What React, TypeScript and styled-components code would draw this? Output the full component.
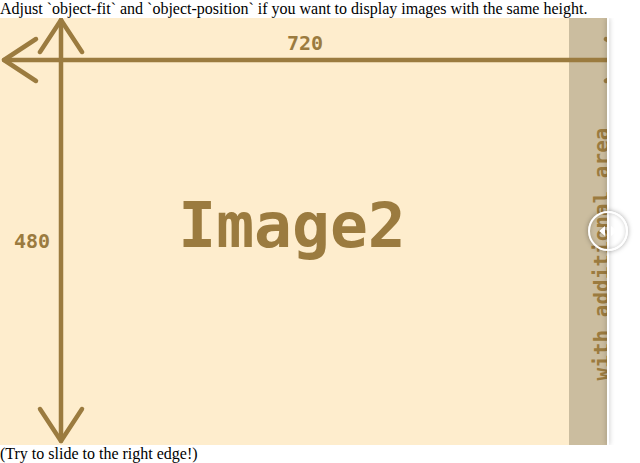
import React from "react";
import styled, { createGlobalStyle } from "styled-components";

const Global = createGlobalStyle`
  html, body { margin: 0; padding: 0; background: #ffffff; }
  body { font-family: "Liberation Serif", "Times New Roman", serif; font-size: 16px; color: #000; }
`;

const Page = styled.div`
  display: flex;
  flex-direction: column;
  width: 640px;
`;

const Note = styled.div`
  line-height: 18px;
  height: 18px;
  white-space: nowrap;
`;

const Slider = styled.div`
  position: relative;
  width: 640px;
  height: 427px;
  overflow: hidden;
  background: #ffffff;
`;

const Clip = styled.div<{ $pos: number }>`
  position: absolute;
  inset: 0;
  overflow: hidden;
  width: ${(p) => p.$pos}px;
`;

const Divider = styled.div<{ $pos: number }>`
  position: absolute;
  top: 0;
  bottom: 0;
  left: ${(p) => p.$pos}px;
  width: 2px;
  background: #ffffff;
  box-shadow: 0 0 5px rgba(0, 0, 0, 0.35);
`;

const Handle = styled.div<{ $pos: number }>`
  position: absolute;
  left: ${(p) => p.$pos - 20}px;
  top: 193px;
  width: 40px;
  height: 40px;
  border: 2px solid #ffffff;
  border-radius: 50%;
  box-shadow: 0 0 5px rgba(0, 0, 0, 0.35), inset 0 0 4px rgba(0, 0, 0, 0.2);
  display: flex;
  align-items: center;
  justify-content: space-between;
  padding: 0 9px;
  box-sizing: border-box;
`;

const ArrowLeft = styled.span`
  width: 0;
  height: 0;
  border-top: 5px solid transparent;
  border-bottom: 5px solid transparent;
  border-right: 6px solid #ffffff;
  filter: drop-shadow(0 0 1px rgba(0, 0, 0, 0.3));
`;

const ArrowRight = styled.span`
  width: 0;
  height: 0;
  border-top: 5px solid transparent;
  border-bottom: 5px solid transparent;
  border-left: 6px solid #ffffff;
`;

const Art = styled.svg`
  display: block;
  width: 640px;
  height: 427px;
`;

const BROWN = "#9b7b3f";
const MONO = '"DejaVu Sans Mono", "Liberation Mono", monospace';

function Image2() {
  return (
    <Art viewBox="0 0 640 427">
      <rect x="0" y="0" width="640" height="427" fill="#feedcd" />
      <rect x="569" y="0" width="71" height="427" fill="#cbbd9f" />
      <g stroke={BROWN} strokeWidth="4.5" strokeLinecap="round" strokeLinejoin="round" fill="none">
        <line x1="4" y1="42" x2="638" y2="42" />
        <polyline points="36,21 4,42 36,63" />
        <polyline points="606,21 638,42 606,63" />
        <line x1="61" y1="2" x2="61" y2="423" />
        <polyline points="40,34 61,2 82,34" />
        <polyline points="40,391 61,423 82,391" />
      </g>
      <g fill={BROWN} fontFamily={MONO} fontWeight="bold" textAnchor="middle">
        <text x="305" y="32" fontSize="20">720</text>
        <text x="32" y="230" fontSize="20">480</text>
        <text x="292" y="229" fontSize="63">Image2</text>
        <text
          x="0"
          y="0"
          fontSize="21"
          transform="translate(609 236) rotate(-90)"
        >
          with additional area
        </text>
      </g>
    </Art>
  );
}

export default function App() {
  const pos = 607;
  return (
    <>
      <Global />
      <Page>
        <Note>Adjust `object-fit` and `object-position` if you want to display images with the same height.</Note>
        <Slider>
          <Clip $pos={pos}>
            <Image2 />
          </Clip>
          <Divider $pos={pos} />
          <Handle $pos={pos + 1}>
            <ArrowLeft />
            <ArrowRight />
          </Handle>
        </Slider>
        <Note>(Try to slide to the right edge!)</Note>
      </Page>
    </>
  );
}
